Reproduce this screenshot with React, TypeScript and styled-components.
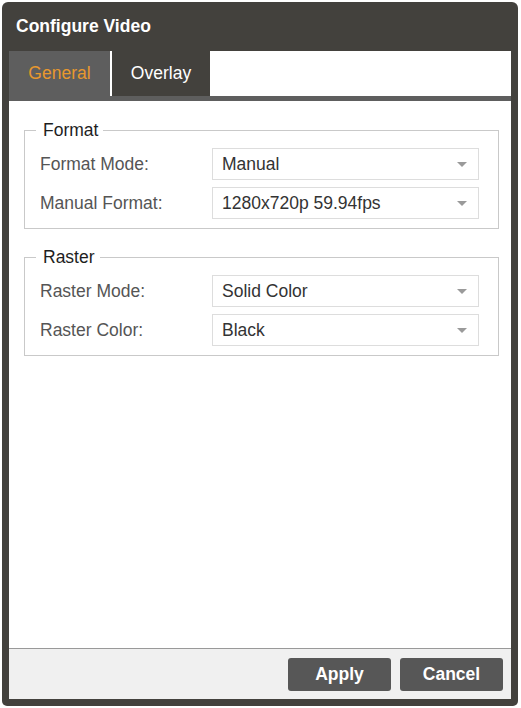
import React from "react";
import styled, { createGlobalStyle } from "styled-components";

const Global = createGlobalStyle`
  html, body { margin: 0; padding: 0; background: #ffffff; }
  body { font-family: "Liberation Sans", Arial, sans-serif; }
  * { box-sizing: border-box; }
`;

const Page = styled.div`
  padding: 2px 3px 2px 2px;
`;

const Frame = styled.div`
  width: 516px;
  height: 704px;
  background: #43413d;
  border-radius: 6px 6px 5px 5px;
  padding: 0 7px 7px;
  display: flex;
  flex-direction: column;
`;

const TitleBar = styled.div`
  height: 49px;
  display: flex;
  align-items: center;
  padding-left: 7px;
  color: #ffffff;
  font-weight: bold;
  font-size: 17.5px;
`;

const TabRow = styled.div`
  height: 50px;
  background: #ffffff;
  border-bottom: 5px solid #5e5e5e;
  display: flex;
`;

const Tab = styled.div<{ $active?: boolean; $width: number }>`
  width: ${(p) => p.$width}px;
  height: 45px;
  display: flex;
  align-items: center;
  justify-content: center;
  font-size: 17.5px;
  background: ${(p) => (p.$active ? "#5e5e5e" : "#43413d")};
  color: ${(p) => (p.$active ? "#e8982e" : "#ffffff")};
  border-right: ${(p) => (p.$active ? "2px solid #ffffff" : "none")};
`;

const Content = styled.div`
  flex: 1;
  background: #ffffff;
  padding: 19px 12px 0 15px;
  display: flex;
  flex-direction: column;
  gap: 18px;
`;

const Fieldset = styled.fieldset`
  margin: 0;
  border: 1px solid #c9c9c9;
  padding: 8px 19px 9px 15px;
  display: flex;
  flex-direction: column;
  gap: 7px;
`;

const Legend = styled.legend`
  padding: 0 5px 0 7px;
  margin-left: -4px;
  font-size: 17.5px;
  color: #1e1e1e;
  line-height: 20px;
`;

const Row = styled.div`
  display: flex;
  align-items: center;
`;

const Label = styled.div`
  width: 172px;
  font-size: 17.5px;
  color: #555555;
`;

const Select = styled.div`
  width: 267px;
  height: 32px;
  border: 1px solid #dddddd;
  display: flex;
  align-items: center;
  justify-content: space-between;
  padding: 0 11px 0 9px;
  font-size: 17.5px;
  color: #333333;
`;

const Arrow = styled.span`
  width: 0;
  height: 0;
  border-left: 5px solid transparent;
  border-right: 5px solid transparent;
  border-top: 5px solid #9a9a9a;
`;

const Footer = styled.div`
  height: 51px;
  background: #f0f0f0;
  border-top: 1px solid #999999;
  display: flex;
  justify-content: flex-end;
  align-items: flex-start;
  padding: 9px 8px 0 0;
  gap: 9px;
`;

const Button = styled.button`
  width: 103px;
  height: 33px;
  background: #575757;
  border: none;
  border-radius: 3px;
  color: #ffffff;
  font-family: "Liberation Sans", Arial, sans-serif;
  font-weight: bold;
  font-size: 17.5px;
  padding: 0;
`;

const Field = ({ label, value }: { label: string; value: string }) => (
  <Row>
    <Label>{label}</Label>
    <Select>
      <span>{value}</span>
      <Arrow />
    </Select>
  </Row>
);

export default function App() {
  return (
    <Page>
      <Global />
      <Frame>
        <TitleBar>Configure Video</TitleBar>
        <TabRow>
          <Tab $active $width={103}>General</Tab>
          <Tab $width={98}>Overlay</Tab>
        </TabRow>
        <Content>
          <Fieldset>
            <Legend>Format</Legend>
            <Field label="Format Mode:" value="Manual" />
            <Field label="Manual Format:" value="1280x720p 59.94fps" />
          </Fieldset>
          <Fieldset>
            <Legend>Raster</Legend>
            <Field label="Raster Mode:" value="Solid Color" />
            <Field label="Raster Color:" value="Black" />
          </Fieldset>
        </Content>
        <Footer>
          <Button>Apply</Button>
          <Button>Cancel</Button>
        </Footer>
      </Frame>
    </Page>
  );
}
